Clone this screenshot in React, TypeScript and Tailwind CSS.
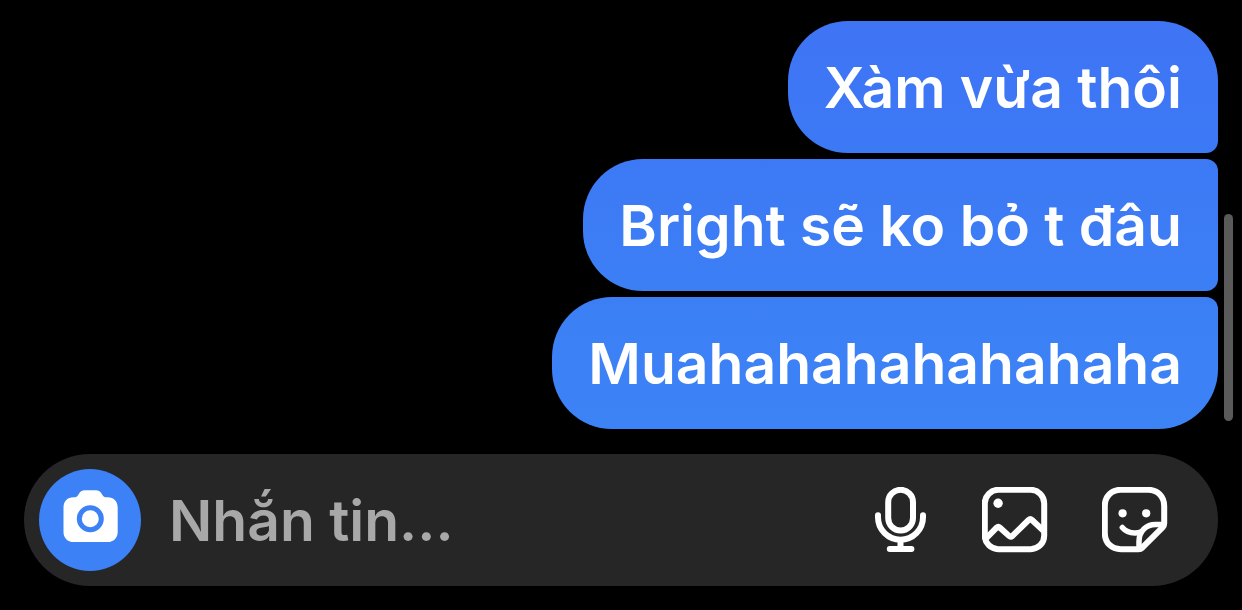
import React from "react";

type Message = { id: number; text: string; shape: string };

const messages: Message[] = [
  {
    id: 1,
    text: "Xàm vừa thôi",
    shape: "rounded-[60px] rounded-br-[12px] from-[#3f74f5] to-[#3c79f5]",
  },
  {
    id: 2,
    text: "Bright sẽ ko bỏ t đâu",
    shape: "rounded-[60px] rounded-r-[12px] from-[#3d79f5] to-[#3c7ff5]",
  },
  {
    id: 3,
    text: "Muahahahahahahaha",
    shape: "rounded-[60px] rounded-tr-[12px] from-[#3c7ff5] to-[#3c83f6]",
  },
];

function CameraIcon() {
  return (
    <svg viewBox="0 0 102 102" className="size-full" aria-hidden="true">
      <path
        fill="#fff"
        d="M34.5 28.3h.5c2.2 0 3.2-.8 4.2-2.4C41 22.6 42.8 21.2 46 21.2h10.6c3.2 0 5 1.4 6.8 4.7 1 1.6 2 2.4 4.2 2.4h1c6 0 10.1 4.1 10.1 10.1v24.5c0 6-4.1 10.1-10.1 10.1H34.5c-6 0-10-4.1-10-10.1V38.4c0-6 4-10.1 10-10.1z"
      />
      <circle cx="51.3" cy="49.7" r="11" fill="none" stroke="#3c82f6" strokeWidth="5" />
    </svg>
  );
}

function MicIcon() {
  return (
    <svg
      viewBox="0 0 54 66"
      className="h-[66px] w-[54px]"
      fill="none"
      stroke="#fff"
      strokeWidth="6"
      strokeLinecap="round"
      aria-hidden="true"
    >
      <rect x="14.2" y="2.8" width="24.8" height="40.6" rx="12.4" />
      <path d="M4 28.2v2.1a22.5 22.5 0 0 0 45 0v-2.1M26.5 53.5v8M15.8 62h21.6" />
    </svg>
  );
}

function ImageIcon() {
  return (
    <svg
      viewBox="0 0 66 66"
      className="size-[66px]"
      fill="none"
      stroke="#fff"
      strokeWidth="6"
      strokeLinejoin="round"
      aria-hidden="true"
    >
      <rect x="2.8" y="2.8" width="59.4" height="59.4" rx="13.5" />
      <path d="M4 51.5l10.6-10.8q1.7-1.6 3.4 0l9 8.2q1.7 1.5 3.4 0L46.6 33q1.7-1.5 3.4 0L61.5 43.8" />
      <circle cx="16.1" cy="16.3" r="4.7" fill="#fff" stroke="none" />
    </svg>
  );
}

function StickerIcon() {
  return (
    <svg
      viewBox="0 0 66 66"
      className="size-[66px]"
      fill="none"
      stroke="#fff"
      strokeWidth="6"
      strokeLinecap="round"
      strokeLinejoin="round"
      aria-hidden="true"
    >
      <path d="M36.5 62.2H19C9.3 62.2 2.8 55.7 2.8 46V19C2.8 9.3 9.3 2.8 19 2.8h27c9.7 0 16.2 6.5 16.2 16.2v17.5q0 2.3-1.6 3.9L40.3 60.7q-1.6 1.5-3.8 1.5z" />
      <path d="M37 61.5V54.5C37 44 44.5 37.5 53.5 37.5H61.5" strokeWidth="5.5" />
      <path d="M20.3 40.5c3 3.6 8.2 5.6 13.4 5.4q2.5-.1 4.8-.9" strokeWidth="5.5" />
      <circle cx="20.6" cy="26.3" r="4.1" fill="#fff" stroke="none" />
      <circle cx="44.2" cy="26.3" r="4.1" fill="#fff" stroke="none" />
    </svg>
  );
}

export default function App() {
  return (
    <main className="relative flex min-h-screen flex-col gap-[25px] bg-black px-6 pt-[21px] pb-6 font-['Inter','Liberation_Sans',sans-serif] text-[57px] leading-[72px] font-semibold">
      <ul className="flex flex-col items-end gap-1.5">
        {messages.map((m) => (
          <li
            key={m.id}
            className={"max-w-full bg-linear-to-b px-9 pt-[31px] pb-[29px] text-white " + m.shape}
          >
            {m.text}
          </li>
        ))}
      </ul>

      <form
        className="flex h-[132px] items-center rounded-full bg-[#262626] pr-[50px] pl-[15px]"
        onSubmit={(e) => e.preventDefault()}
      >
        <button type="button" aria-label="Camera" className="size-[102px] shrink-0 rounded-full bg-[#3c82f6]">
          <CameraIcon />
        </button>
        <input
          type="text"
          aria-label="Nhắn tin"
          placeholder="Nhắn tin..."
          className="ml-7 h-[100px] min-w-0 flex-1 bg-transparent text-white outline-none placeholder:text-[#a8a8a8]"
        />
        <div className="flex shrink-0 items-center gap-[54px]">
          <button type="button" aria-label="Voice message">
            <MicIcon />
          </button>
          <button type="button" aria-label="Photo">
            <ImageIcon />
          </button>
          <button type="button" aria-label="Sticker">
            <StickerIcon />
          </button>
        </div>
      </form>

      <div className="absolute top-[214px] right-[9px] h-[207px] w-[9px] rounded-full bg-[#5a5a5a]" />
    </main>
  );
}
